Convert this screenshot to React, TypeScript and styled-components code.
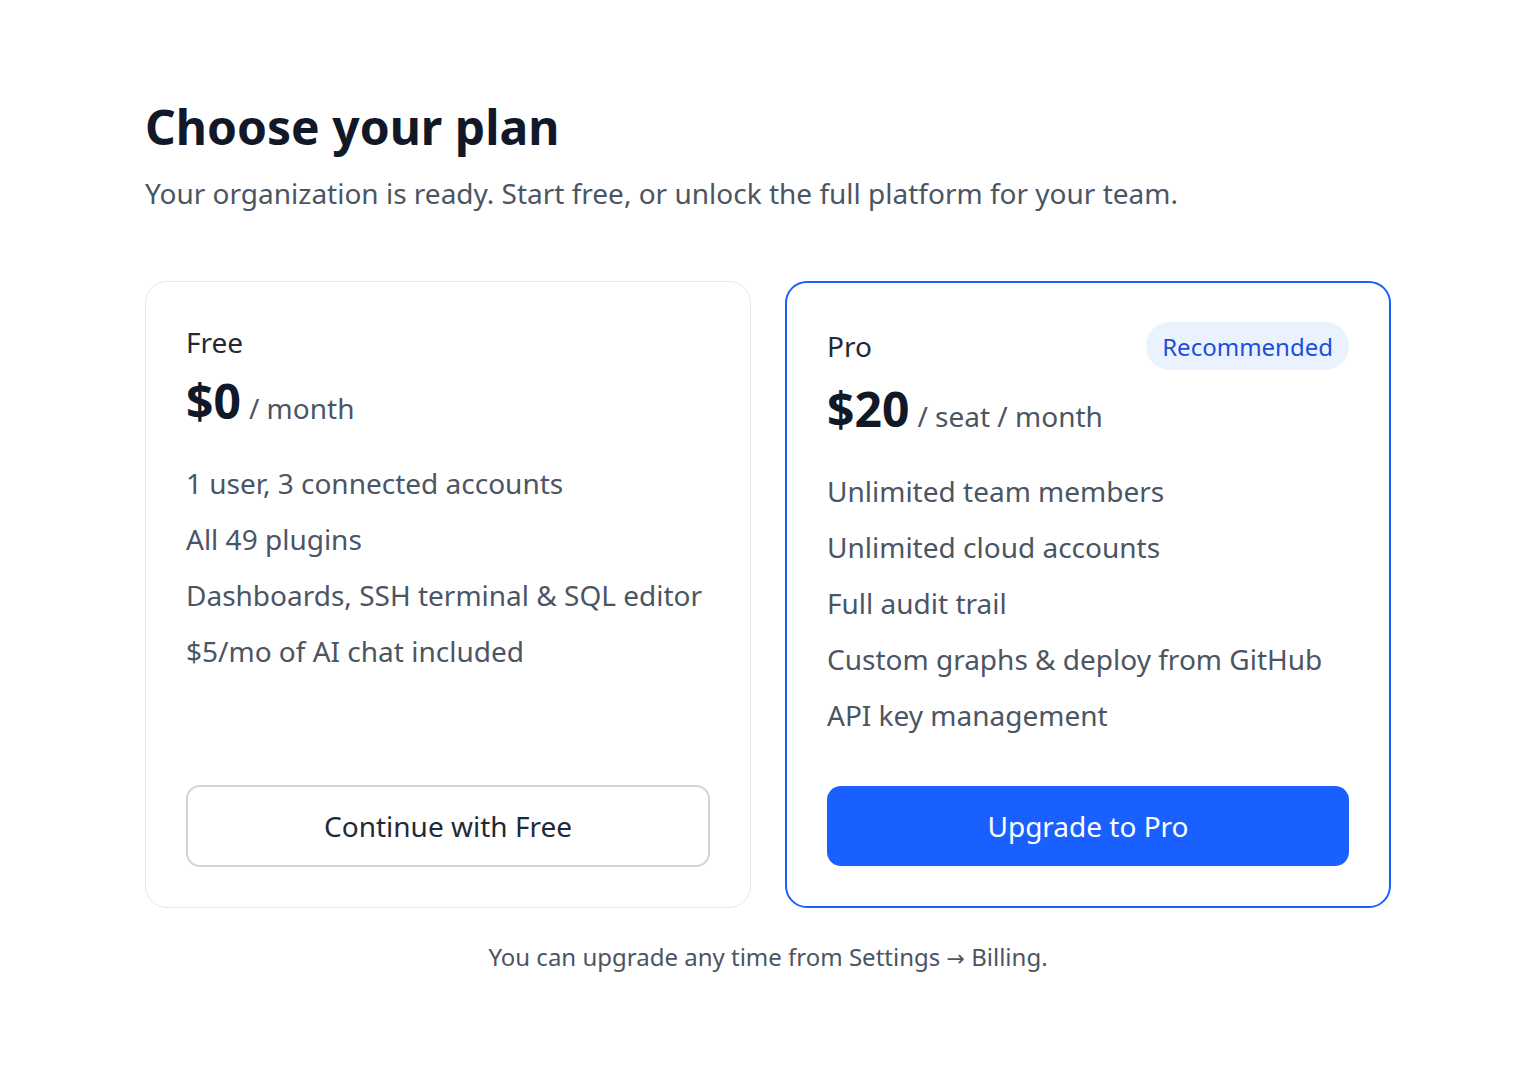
import React from "react";
import styled, { createGlobalStyle } from "styled-components";

interface Plan {
  id: string;
  name: string;
  price: string;
  unit: string;
  features: string[];
  cta: string;
  recommended?: boolean;
}

const plans: Plan[] = [
  {
    id: "free",
    name: "Free",
    price: "$0",
    unit: "/ month",
    features: [
      "1 user, 3 connected accounts",
      "All 49 plugins",
      "Dashboards, SSH terminal & SQL editor",
      "$5/mo of AI chat included",
    ],
    cta: "Continue with Free",
  },
  {
    id: "pro",
    name: "Pro",
    price: "$20",
    unit: "/ seat / month",
    features: [
      "Unlimited team members",
      "Unlimited cloud accounts",
      "Full audit trail",
      "Custom graphs & deploy from GitHub",
      "API key management",
    ],
    cta: "Upgrade to Pro",
    recommended: true,
  },
];

const App: React.FC = () => {
  return (
    <>
      <GlobalStyle />
      <Page>
        <Title>Choose your plan</Title>
        <Subtitle>
          Your organization is ready. Start free, or unlock the full platform
          for your team.
        </Subtitle>

        <PlanGrid>
          {plans.map((plan) => (
            <Card key={plan.id} $highlight={!!plan.recommended}>
              <CardHeader>
                <PlanName>{plan.name}</PlanName>
                {plan.recommended && <Badge>Recommended</Badge>}
              </CardHeader>

              <PriceRow>
                <Price>{plan.price}</Price>
                <PriceUnit>{plan.unit}</PriceUnit>
              </PriceRow>

              <FeatureList>
                {plan.features.map((f) => (
                  <Feature key={f}>{f}</Feature>
                ))}
              </FeatureList>

              <CtaButton $primary={!!plan.recommended}>{plan.cta}</CtaButton>
            </Card>
          ))}
        </PlanGrid>

        <Footnote>
          You can upgrade any time from Settings <Arrow>→</Arrow> Billing.
        </Footnote>
      </Page>
    </>
  );
};

const GlobalStyle = createGlobalStyle`
  body {
    margin: 0;
    background: #ffffff;
    font-family: "Noto Sans", "Open Sans", sans-serif;
    color: #111827;
  }
`;

const Page = styled.main`
  width: 1246px;
  margin: 0 auto;
  padding: 98px 0 60px;
`;

const Title = styled.h1`
  margin: 0;
  font-size: 48px;
  line-height: 58px;
  font-weight: 700;
  color: #111827;
`;

const Subtitle = styled.p`
  margin: 17px 0 0;
  font-size: 28px;
  line-height: 40px;
  color: #4b5563;
`;

const PlanGrid = styled.div`
  display: grid;
  grid-template-columns: 1fr 1fr;
  gap: 34px;
  margin-top: 68px;
`;

const Card = styled.section<{ $highlight: boolean }>`
  display: flex;
  flex-direction: column;
  padding: ${(p) => (p.$highlight ? "39px 40px 40px" : "40px")};
  border: ${(p) => (p.$highlight ? "2px solid #1a5fff" : "1px solid #e5e7eb")};
  border-radius: 22px;
  background: #fff;
`;

const CardHeader = styled.div`
  display: flex;
  align-items: center;
  justify-content: space-between;
  min-height: 40px;
`;

const PlanName = styled.div`
  font-size: 28px;
  line-height: 38px;
  color: #1f2937;
`;

const Badge = styled.span`
  display: inline-flex;
  align-items: center;
  height: 48px;
  padding: 0 16px;
  border-radius: 999px;
  background: #ebf2ff;
  color: #1d4ed8;
  font-size: 24px;
`;

const PriceRow = styled.div`
  display: flex;
  align-items: baseline;
  gap: 8px;
  margin-top: 10px;
`;

const Price = styled.span`
  font-size: 48px;
  line-height: 58px;
  font-weight: 700;
  color: #111827;
`;

const PriceUnit = styled.span`
  font-size: 28px;
  color: #4b5563;
`;

const FeatureList = styled.ul`
  list-style: none;
  margin: 32px 0 50px;
  padding: 0;
  display: flex;
  flex-direction: column;
  gap: 14px;
`;

const Feature = styled.li`
  font-size: 28px;
  line-height: 42px;
  color: #4b5563;
`;

const CtaButton = styled.button<{ $primary: boolean }>`
  margin-top: auto;
  width: 100%;
  height: ${(p) => (p.$primary ? "80px" : "82px")};
  border-radius: 14px;
  font-family: inherit;
  font-size: 28px;
  cursor: pointer;
  border: ${(p) => (p.$primary ? "none" : "2px solid #d1d5db")};
  background: ${(p) => (p.$primary ? "#1a5fff" : "#ffffff")};
  color: ${(p) => (p.$primary ? "#ffffff" : "#1f2937")};
`;

const Footnote = styled.p`
  margin: 32px 0 0;
  text-align: center;
  font-size: 24px;
  line-height: 34px;
  color: #4b5563;
`;

const Arrow = styled.span`
  font-family: "DejaVu Sans", sans-serif;
  font-size: 22px;
`;

export default App;
